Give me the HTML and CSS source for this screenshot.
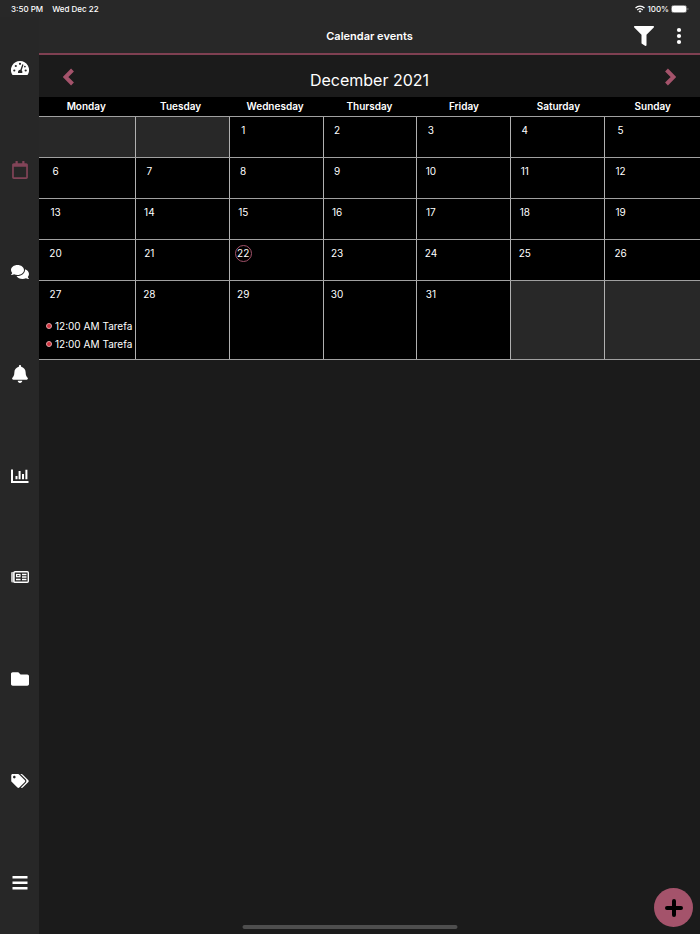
FILE: index.html
```
<!DOCTYPE html>
<html lang="en">
<head>
    <meta charset="UTF-8">
    <meta name="viewport" content="width=device-width, initial-scale=1.0">
    <title>Calendar events</title>
    <link rel="stylesheet" href="styles.css">
</head>
<body>
    <div class="statusBar">
        <span>3:50 PM</span>
        <span>Wed Dec 22</span>
        <div class="statusRight">
            <svg class="line" width="10" height="8" viewBox="0 0 20 16" stroke-width="2.500">
                <path d="M1 6a13 13 0 0 1 18 0M4.500 10a8 8 0 0 1 11 0"/>
                <path d="M10 15.500l-3-3a4 4 0 0 1 6 0z" fill="#fff" stroke="none"/>
            </svg>
            <span>100%</span>
            <svg width="18" height="8" viewBox="0 0 18 8">
                <rect x="0.500" y="0.500" width="15" height="7" rx="2" fill="none" stroke="#8a8a8a"/>
                <rect x="1" y="1" width="14" height="6" rx="1" fill="#fff"/>
                <path d="M16.500 2.800v2.400q1-.4 1-1.200t-1-1.200z" fill="#8a8a8a"/>
            </svg>
        </div>
    </div>

    <div class="layout">
        <nav class="sidebar">
            <a href="#" aria-label="Dashboard">
                <svg width="18" height="14" viewBox="0 0 18 14">
                    <path fill="#fff" d="M9 0a9 9 0 0 0-7.800 13.500q.3.500.9.500h13.800q.6 0 .9-.5A9 9 0 0 0 9 0z"/>
                    <g fill="#272727">
                        <circle cx="3.300" cy="9.500" r="1.100"/>
                        <circle cx="4.800" cy="5" r="1.100"/>
                        <circle cx="9" cy="2.800" r="1.100"/>
                        <circle cx="14.700" cy="9.500" r="1.100"/>
                        <circle cx="13.900" cy="5.600" r=".9"/>
                        <path d="M11.300 3.300l1.200.4-1.800 5.500q.9.800.6 2.800H7q-.4-2.900 2.400-3.200z"/>
                    </g>
                </svg>
            </a>
            <a href="#" class="active" aria-label="Calendar">
                <svg width="16" height="18" viewBox="0 0 448 512"><path d="M400 64h-48V12c0-6.600-5.400-12-12-12h-40c-6.600 0-12 5.400-12 12v52H160V12c0-6.600-5.400-12-12-12h-40c-6.600 0-12 5.400-12 12v52H48C21.500 64 0 85.500 0 112v352c0 26.500 21.500 48 48 48h352c26.500 0 48-21.500 48-48V112c0-26.500-21.500-48-48-48zm-6 400H54c-3.300 0-6-2.700-6-6V160h352v298c0 3.300-2.700 6-6 6z"/></svg>
            </a>
            <a href="#" aria-label="Messages">
                <svg width="18" height="16" viewBox="0 0 576 512"><path d="M416 192c0-88.400-93.100-160-208-160S0 103.600 0 192c0 34.300 14.100 65.900 38 92-13.400 30.200-35.500 54.200-35.800 54.500-2.200 2.300-2.800 5.700-1.500 8.700S4.800 352 8 352c36.600 0 66.900-12.300 88.700-25 32.200 15.700 70.300 25 111.300 25 114.900 0 208-71.600 208-160zm122 220c23.900-26 38-57.700 38-92 0-66.900-53.500-124.200-129.300-148.100.9 6.600 1.300 13.300 1.300 20.100 0 105.900-107.700 192-240 192-10.800 0-21.300-.8-31.700-1.900C207.800 439.600 281.800 480 368 480c41 0 79.100-9.200 111.300-25 21.800 12.700 52.100 25 88.700 25 3.200 0 6.100-1.900 7.300-4.800 1.300-2.900.7-6.300-1.500-8.700-.3-.3-22.400-24.200-35.800-54.500z"/></svg>
            </a>
            <a href="#" aria-label="Notifications">
                <svg width="16" height="18" viewBox="0 0 448 512"><path d="M224 512c35.320 0 63.970-28.650 63.970-64H160.030c0 35.350 28.650 64 63.970 64zm215.390-149.710c-19.320-20.760-55.470-51.990-55.470-154.290 0-77.700-54.480-139.900-127.940-155.160V32c0-17.670-14.320-32-31.980-32s-31.980 14.330-31.980 32v20.840C118.560 68.100 64.080 130.300 64.080 208c0 102.300-36.150 133.530-55.470 154.290-6 6.450-8.660 14.160-8.610 21.710.11 16.400 12.980 32 32.100 32h383.800c19.120 0 32-15.600 32.100-32 .05-7.550-2.610-15.270-8.610-21.710z"/></svg>
            </a>
            <a href="#" aria-label="Reports">
                <svg class="line" width="18" height="14" viewBox="0 0 18 14" stroke-width="2">
                    <path d="M1 .5V13h16.500"/>
                    <path d="M5.500 10.300V7M8.600 10.300V2M12 10.300V5M15.400 10.300V.8"/>
                </svg>
            </a>
            <a href="#" aria-label="News">
                <svg class="line" width="18" height="12" viewBox="0 0 18 12">
                    <path fill="#fff" fill-opacity=".7" stroke="none" d="M3 1v10.500H1.500Q0 11.500 0 10V2q0-1 1-1z"/>
                    <rect x="3" y=".7" width="14.300" height="10.600" rx="1" stroke-width="1.400"/>
                    <rect x="5.600" y="3.500" width="3.400" height="2.200" stroke-width="1.200"/>
                    <path d="M5 8.500h4.600M11 3.500h4.500M11 6h4.500M11 8.500h4.500" stroke-width="1.300"/>
                </svg>
            </a>
            <a href="#" aria-label="Files">
                <svg width="18" height="18" viewBox="0 0 512 512"><path d="M464 128H272l-64-64H48C21.500 64 0 85.500 0 112v288c0 26.500 21.500 48 48 48h416c26.500 0 48-21.500 48-48V176c0-26.500-21.500-48-48-48z"/></svg>
            </a>
            <a href="#" aria-label="Tags">
                <svg width="18" height="14" viewBox="0 0 640 512"><path d="M497.941 225.941L286.059 14.059A48 48 0 0 0 252.118 0H48C21.490 0 0 21.490 0 48v204.118a48 48 0 0 0 14.059 33.941l211.882 211.882c18.744 18.745 49.136 18.746 67.882 0l204.118-204.118c18.745-18.745 18.745-49.137 0-67.882zM112 160c-26.510 0-48-21.490-48-48s21.490-48 48-48 48 21.490 48 48-21.490 48-48 48zm513.941 133.823L421.823 497.941c-18.745 18.745-49.137 18.745-67.882 0l-.36-.36L527.640 323.522c16.999-16.999 26.362-39.600 26.362-63.640s-9.363-46.641-26.362-63.640L331.397 0h48.721a48 48 0 0 1 33.941 14.059l211.882 211.882c18.745 18.745 18.745 49.137 0 67.882z"/></svg>
            </a>
            <a href="#" aria-label="Menu">
                <svg width="16" height="14" viewBox="0 0 16 14"><path d="M.5 0h15v2.500H.5zM.5 5.500h15V8H.5zM.5 11h15v2.500H.5z"/></svg>
            </a>
        </nav>

        <main>
            <header class="topBar">
                <h1>Calendar events</h1>
                <div class="actions">
                    <button type="button" aria-label="Filter">
                        <svg width="20" height="20" viewBox="0 0 512 512"><path d="M487.976 0H24.028C2.710 0-8.047 25.866 7.058 40.971L192 225.941V432c0 7.831 3.821 15.170 10.237 19.662l80 55.980C298.020 518.690 320 507.493 320 487.980V225.941l184.947-184.970C520.021 25.896 509.338 0 487.976 0z"/></svg>
                    </button>
                    <button type="button" aria-label="More">
                        <svg width="6" height="18" viewBox="0 0 6 18"><circle cx="3" cy="3" r="2.100"/><circle cx="3" cy="9" r="2.100"/><circle cx="3" cy="15" r="2.100"/></svg>
                    </button>
                </div>
            </header>

            <div class="monthBar">
                <button type="button" aria-label="Previous month">
                    <svg width="12" height="18" viewBox="0 0 12 18"><path d="M9.500 2L2.500 9l7 7"/></svg>
                </button>
                <h2>December 2021</h2>
                <button type="button" aria-label="Next month">
                    <svg width="12" height="18" viewBox="0 0 12 18"><path d="M2.500 2l7 7-7 7"/></svg>
                </button>
            </div>

            <table class="calendar">
                <thead>
                    <tr><th>Monday</th><th>Tuesday</th><th>Wednesday</th><th>Thursday</th><th>Friday</th><th>Saturday</th><th>Sunday</th></tr>
                </thead>
                <tbody>
                    <tr>
                        <td class="empty"></td>
                        <td class="empty"></td>
                        <td><span class="day">1</span></td>
                        <td><span class="day">2</span></td>
                        <td><span class="day">3</span></td>
                        <td><span class="day">4</span></td>
                        <td><span class="day">5</span></td>
                    </tr>
                    <tr>
                        <td><span class="day">6</span></td>
                        <td><span class="day">7</span></td>
                        <td><span class="day">8</span></td>
                        <td><span class="day">9</span></td>
                        <td><span class="day">10</span></td>
                        <td><span class="day">11</span></td>
                        <td><span class="day">12</span></td>
                    </tr>
                    <tr>
                        <td><span class="day">13</span></td>
                        <td><span class="day">14</span></td>
                        <td><span class="day">15</span></td>
                        <td><span class="day">16</span></td>
                        <td><span class="day">17</span></td>
                        <td><span class="day">18</span></td>
                        <td><span class="day">19</span></td>
                    </tr>
                    <tr>
                        <td><span class="day">20</span></td>
                        <td><span class="day">21</span></td>
                        <td><span class="day today">22</span></td>
                        <td><span class="day">23</span></td>
                        <td><span class="day">24</span></td>
                        <td><span class="day">25</span></td>
                        <td><span class="day">26</span></td>
                    </tr>
                    <tr>
                        <td>
                            <span class="day">27</span>
                            <ul class="events">
                                <li><span>12:00 AM</span><span>Tarefa</span></li>
                                <li><span>12:00 AM</span><span>Tarefa</span></li>
                            </ul>
                        </td>
                        <td><span class="day">28</span></td>
                        <td><span class="day">29</span></td>
                        <td><span class="day">30</span></td>
                        <td><span class="day">31</span></td>
                        <td class="empty"></td>
                        <td class="empty"></td>
                    </tr>
                </tbody>
            </table>
        </main>
    </div>

    <button type="button" class="addBtn" aria-label="Add event">
        <svg width="18" height="18" viewBox="0 0 18 18"><path d="M9 2v14M2 9h14"/></svg>
    </button>
    <div class="homeBar"></div>
</body>
</html>
```
FILE: styles.css
```
*, *::before{
    box-sizing: border-box;
    margin: 0;
    padding: 0;
}
body{
    display: flex;
    flex-direction: column;
    min-height: 100vh;
    background: #1b1b1b;
    color: #fff;
    font-family: Inter, "Liberation Sans", sans-serif;
    font-size: 10px;
}
button{
    border: 0;
    background: none;
    cursor: pointer;
}
svg{
    display: block;
    fill: #fff;
}
.line{
    fill: none;
    stroke: #fff;
}
/* status bar */
.statusBar{
    display: flex;
    align-items: center;
    gap: 9px;
    height: 17px;
    padding: 0 11px;
    background: #282828;
    font-size: 8px;
    font-weight: 500;
}
.statusRight{
    display: flex;
    align-items: center;
    gap: 2px;
    margin-left: auto;
}
.layout{
    flex: 1;
    display: flex;
}
/* sidebar */
.sidebar{
    display: flex;
    flex-direction: column;
    width: 39px;
    background: #272727;
}
.sidebar a{
    flex: 1;
    display: flex;
    justify-content: center;
    align-items: center;
}
.sidebar .active svg{
    fill: #824458;
}
main{
    flex: 1;
}
/* header */
.topBar{
    position: relative;
    display: flex;
    justify-content: center;
    align-items: center;
    height: 38px;
    padding-top: 2px;
    background: #282828;
    border-bottom: 2px solid #7f4052;
}
.topBar h1{
    font-size: 11px;
    font-weight: 600;
}
.actions{
    position: absolute;
    right: 18px;
    display: flex;
    align-items: center;
    gap: 22px;
}
.monthBar{
    display: flex;
    justify-content: space-between;
    align-items: center;
    height: 42px;
    padding: 2px 24px 0;
}
.monthBar h2{
    padding-top: 6px;
    font-size: 16px;
    font-weight: 400;
}
.monthBar svg{
    fill: none;
    stroke: #a4536b;
    stroke-width: 4;
}
/* calendar */
.calendar{
    display: block;
    background: #000;
}
.calendar thead, .calendar tbody{
    display: block;
}
.calendar tr{
    display: grid;
    grid-template-columns: 97fr 94fr 94fr 94fr 94fr 94fr 95fr;
    min-height: 41px;
    border-bottom: 1px solid #a0a0a0;
}
.calendar thead tr{
    grid-template-columns: repeat(7, 1fr);
    min-height: 20px;
}
.calendar th{
    font-size: 10px;
    font-weight: 600;
    line-height: 19px;
}
.calendar td{
    padding: 5px 5px 6px;
    border-right: 1px solid #b0b0b0;
}
.calendar td:first-child{
    padding-left: 8px;
}
.calendar td:last-child{
    padding-left: 7px;
    border-right: 0;
}
.calendar .empty{
    background: #282828;
}
.day{
    display: block;
    width: 17px;
    height: 17px;
    line-height: 17px;
    text-align: center;
}
.today{
    border: 1px solid #a4536b;
    border-radius: 50%;
    line-height: 15px;
}
.events{
    margin: 0 -4px 0 -1px;
    padding-top: 14px;
    list-style: none;
}
.events li{
    display: flex;
    align-items: center;
    gap: 3px;
    height: 18px;
    white-space: nowrap;
}
.events li::before{
    content: "";
    flex: none;
    width: 6px;
    height: 6px;
    border: 1px solid #e0a0a4;
    border-radius: 50%;
    background: #d0333f;
}
/* floating items */
.addBtn{
    position: fixed;
    right: 7px;
    bottom: 7px;
    display: flex;
    justify-content: center;
    align-items: center;
    width: 39px;
    height: 39px;
    border-radius: 50%;
    background: #a4536b;
}
.addBtn svg{
    stroke: #000;
    stroke-width: 4;
    stroke-linecap: round;
}
.homeBar{
    position: fixed;
    left: 50%;
    bottom: 5px;
    width: 215px;
    height: 4px;
    border-radius: 2px;
    background: #4e4e4e;
    transform: translateX(-50%);
}
```
